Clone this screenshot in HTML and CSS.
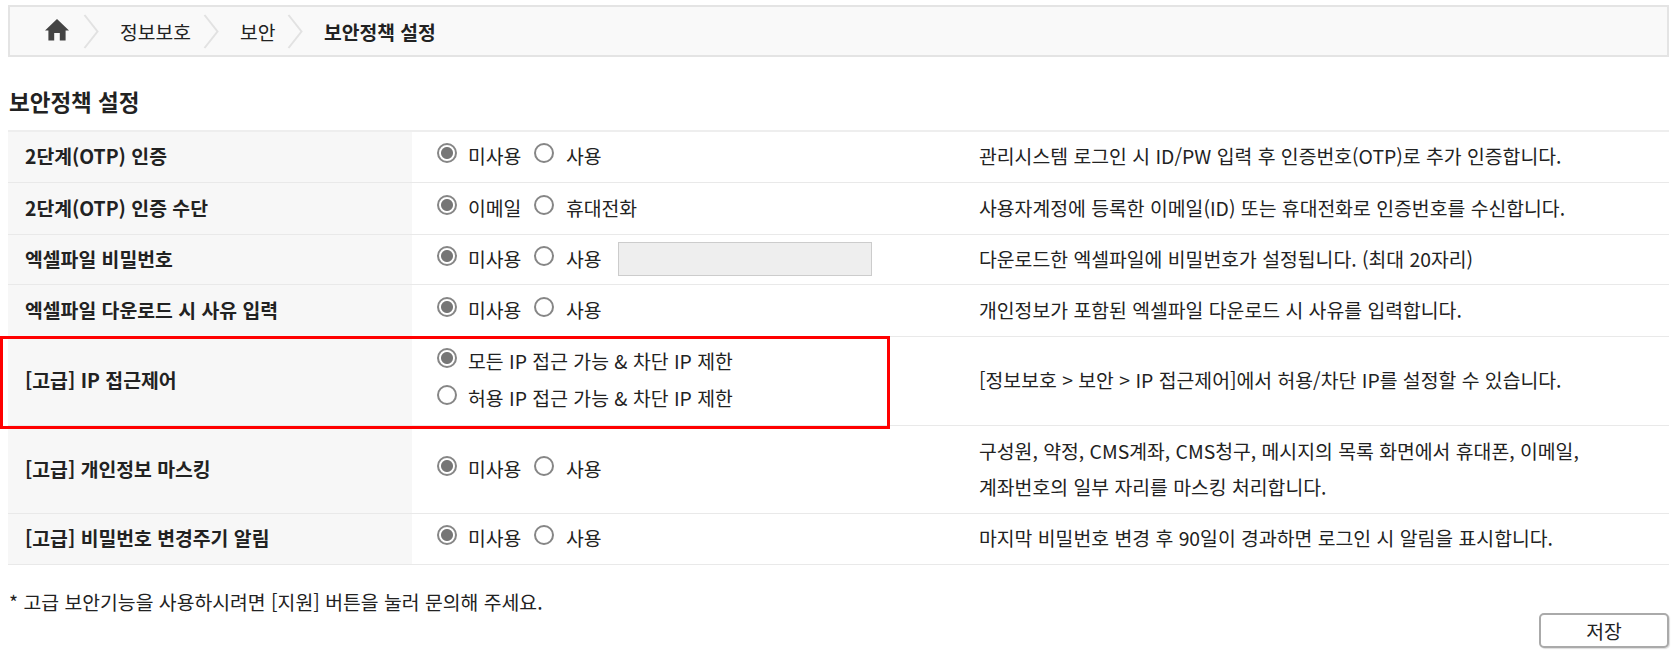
FILE: index.html
```html
<!DOCTYPE html>
<html lang="ko">
<head>
<meta charset="utf-8">
<title>보안정책 설정</title>
<link rel="stylesheet" href="styles.css">
</head>
<body>
<nav class="crumbs">
  <svg class="home" viewBox="0 0 24 22"><path d="M12 0L24 11.5H20.6V21.5H14.8V14H9.2V21.5H3.4V11.5H0Z"/></svg>
  <svg class="chev c1" viewBox="0 0 20 49"><path d="M4.500 8L17.500 24.500L4.500 41"/></svg>
  <span class="t1">정보보호</span>
  <svg class="chev c2" viewBox="0 0 20 49"><path d="M4.500 8L17.500 24.500L4.500 41"/></svg>
  <span class="t2">보안</span>
  <svg class="chev c3" viewBox="0 0 20 49"><path d="M4.500 8L17.500 24.500L4.500 41"/></svg>
  <strong class="t3">보안정책 설정</strong>
</nav>
<h1 class="title">보안정책 설정</h1>
<form class="page">
  <div class="policies">
    <div class="row">
      <div class="name">2단계(OTP) 인증</div>
      <div class="choice"><label class="opt"><input type="radio" name="a" checked>미사용</label><label class="opt"><input type="radio" name="a">사용</label></div>
      <div class="desc">관리시스템 로그인 시 ID/PW 입력 후 인증번호(OTP)로 추가 인증합니다.</div>
    </div>
    <div class="row">
      <div class="name">2단계(OTP) 인증 수단</div>
      <div class="choice"><label class="opt"><input type="radio" name="b" checked>이메일</label><label class="opt"><input type="radio" name="b">휴대전화</label></div>
      <div class="desc">사용자계정에 등록한 이메일(ID) 또는 휴대전화로 인증번호를 수신합니다.</div>
    </div>
    <div class="row">
      <div class="name">엑셀파일 비밀번호</div>
      <div class="choice"><label class="opt"><input type="radio" name="c" checked>미사용</label><label class="opt"><input type="radio" name="c">사용</label><input class="password" type="text" disabled></div>
      <div class="desc">다운로드한 엑셀파일에 비밀번호가 설정됩니다. (최대 20자리)</div>
    </div>
    <div class="row">
      <div class="name">엑셀파일 다운로드 시 사유 입력</div>
      <div class="choice"><label class="opt"><input type="radio" name="d" checked>미사용</label><label class="opt"><input type="radio" name="d">사용</label></div>
      <div class="desc">개인정보가 포함된 엑셀파일 다운로드 시 사유를 입력합니다.</div>
    </div>
    <div class="row marked">
      <div class="name">[고급] IP 접근제어</div>
      <div class="choice stacked"><label class="opt"><input type="radio" name="e" checked>모든 IP 접근 가능 &amp; 차단 IP 제한</label><label class="opt"><input type="radio" name="e">허용 IP 접근 가능 &amp; 차단 IP 제한</label></div>
      <div class="desc">[정보보호 &gt; 보안 &gt; IP 접근제어]에서 허용/차단 IP를 설정할 수 있습니다.</div>
    </div>
    <div class="row">
      <div class="name">[고급] 개인정보 마스킹</div>
      <div class="choice"><label class="opt"><input type="radio" name="f" checked>미사용</label><label class="opt"><input type="radio" name="f">사용</label></div>
      <div class="desc">구성원, 약정, CMS계좌, CMS청구, 메시지의 목록 화면에서 휴대폰, 이메일,<br>계좌번호의 일부 자리를 마스킹 처리합니다.</div>
    </div>
    <div class="row">
      <div class="name">[고급] 비밀번호 변경주기 알림</div>
      <div class="choice"><label class="opt"><input type="radio" name="g" checked>미사용</label><label class="opt"><input type="radio" name="g">사용</label></div>
      <div class="desc">마지막 비밀번호 변경 후 90일이 경과하면 로그인 시 알림을 표시합니다.</div>
    </div>
  </div>
  <p class="note">* 고급 보안기능을 사용하시려면 [지원] 버튼을 눌러 문의해 주세요.</p>
  <div class="actions"><button class="save" type="button">저장</button></div>
</form>
</body>
</html>
```
FILE: styles.css
```css
*, *::after { box-sizing: border-box; }
body {
  margin: 0;
  padding: 5px 5px 0 8px;
  height: 653px;
  overflow: hidden;
  background: #fff;
  color: #222;
  font: 19.350px/36px "Noto Sans CJK KR", sans-serif;
}
.crumbs {
  display: flex;
  align-items: center;
  height: 52px;
  padding-left: 35px;
  border: 2px solid #e4e4e4;
  background: #f9f9f9;
  white-space: nowrap;
}
.crumbs span, .crumbs strong { padding-top: 1px; font-size: 19.250px; }
.home { width: 24px; height: 22px; fill: #444; margin-top: -2px; }
.chev { width: 20px; height: 49px; flex: none; fill: none; stroke: #e2e2e2; stroke-width: 2; }
.c1 { margin-left: 11px; }
.t1 { width: 70px; margin-left: 20px; }
.c2 { margin-left: 10px; }
.t2 { width: 35px; margin-left: 20px; }
.c3 { margin-left: 9px; }
.t3 { margin-left: 20px; }
.title { margin: 26px 0 11px; padding-left: 1px; font-size: 22.500px; line-height: 36px; }
.policies {
  display: grid;
  grid-template-rows: 51px 52px 50px 52px 89px 88px 51px;
  border-top: 2px solid #eee;
}
.row {
  position: relative;
  display: grid;
  grid-template-columns: 404px 567px 1fr;
  border-bottom: 1px solid #e9e9e9;
}
.name {
  display: flex;
  align-items: center;
  padding: 0 0 2px 17px;
  background: #f7f7f7;
  font-weight: 700;
}
.choice { display: flex; align-items: center; padding: 0 0 2px 24px; white-space: nowrap; }
.stacked { flex-direction: column; align-items: flex-start; padding-top: 5px; }
.opt { display: flex; align-items: center; height: 37.500px; margin-right: 12.500px; }
.opt input {
  appearance: none;
  width: 20px;
  height: 20px;
  margin: 0 11.500px 6px 0.500px;
  border: 2px solid #868686;
  border-radius: 50%;
  background: #fff;
}
.opt input:checked { background: radial-gradient(circle, #767676 5.500px, #fff 6.500px); }
.password { width: 254px; height: 34px; margin: 0 0 0 4px; border: 1px solid #ccc; background: #eee; }
.desc { display: flex; align-items: center; padding-bottom: 2px; white-space: nowrap; }
.marked::after {
  content: "";
  position: absolute;
  z-index: 1;
  left: -8px;
  top: -1px;
  width: 890px;
  height: 93px;
  border: 3px solid #f00;
}
.note { margin: 19px 0 0 1px; font-size: 19.350px; line-height: 36px; }
.actions { display: flex; justify-content: flex-end; margin-top: -7px; }
.save {
  width: 130px;
  height: 35px;
  padding: 0;
  border: 2px solid #aaa;
  border-radius: 5px;
  background: #fff;
  box-shadow: 1px 1px 1px #ddd;
  color: #222;
  font: inherit;
  line-height: 32px;
}
```
